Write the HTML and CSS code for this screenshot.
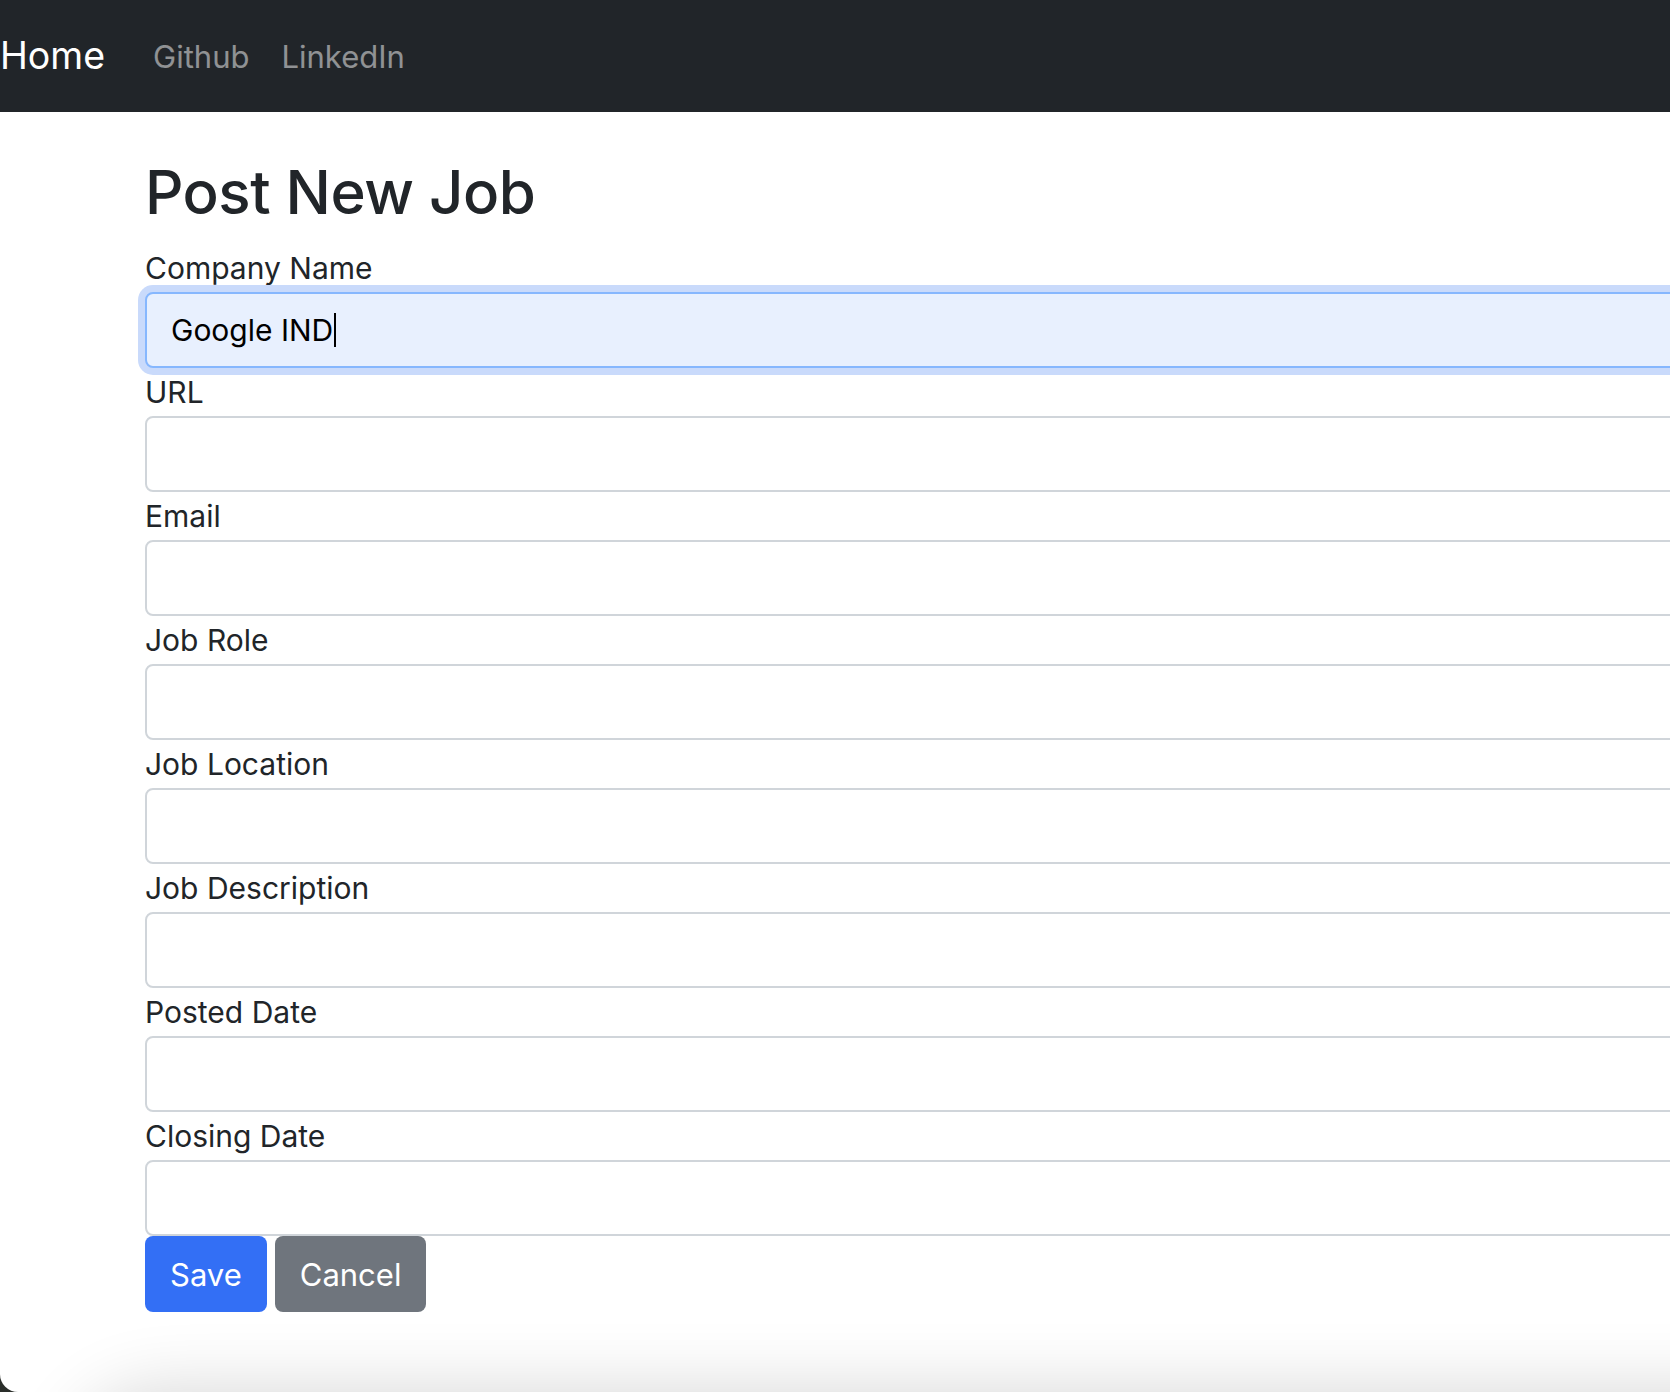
FILE: index.html
```html
<!DOCTYPE html>
<html lang="en">
<head>
<meta charset="utf-8">
<title>Post New Job</title>
<link rel="stylesheet" href="styles.css">
</head>
<body>
<div class="window">
  <nav class="navbar">
    <a class="brand" href="#">Home</a>
    <ul class="nav">
      <li><a class="nav-link" href="#">Github</a></li>
      <li><a class="nav-link" href="#">LinkedIn</a></li>
    </ul>
  </nav>
  <main class="content">
    <h1 class="title">Post New Job</h1>
    <form class="form">
      <label class="label">Company Name</label>
      <div class="control focused">Google IND<span class="caret"></span></div>
      <label class="label">URL</label>
      <input class="control" type="text">
      <label class="label">Email</label>
      <input class="control" type="text">
      <label class="label">Job Role</label>
      <input class="control" type="text">
      <label class="label">Job Location</label>
      <input class="control" type="text">
      <label class="label">Job Description</label>
      <input class="control" type="text">
      <label class="label">Posted Date</label>
      <input class="control" type="text">
      <label class="label">Closing Date</label>
      <input class="control" type="text">
      <div class="actions">
        <button type="button" class="btn btn-primary">Save</button>
        <button type="button" class="btn btn-secondary">Cancel</button>
      </div>
    </form>
  </main>
  <div class="dock-shadow"></div>
</div>
</body>
</html>
```

FILE: styles.css
```css
html, body {
  margin: 0;
  padding: 0;
  background: #2a2e2a;
}

body {
  font-family: Inter, "Noto Sans", "Liberation Sans", sans-serif;
  color: #212529;
}

.window {
  position: relative;
  width: 1670px;
  height: 1392px;
  overflow: hidden;
  background: #ffffff;
  border-bottom-left-radius: 18px;
}

.navbar {
  display: flex;
  align-items: center;
  height: 112px;
  background: #212529;
  padding: 0;
  box-sizing: border-box;
}

.brand {
  font-size: 37.5px;
  color: #ffffff;
  text-decoration: none;
  margin-right: 32px;
  line-height: 1;
  padding-left: 0;
}

.nav {
  display: flex;
  list-style: none;
  margin: 0;
  padding: 0;
}

.nav-link {
  display: block;
  padding: 0 16px;
  font-size: 31px;
  color: rgba(255, 255, 255, 0.5);
  text-decoration: none;
}

.content {
  padding: 44px 0 0 145px;
}

.title {
  margin: 0 0 16px;
  font-size: 60px;
  font-weight: 500;
  line-height: 72px;
  letter-spacing: -0.5px;
}

.form {
  display: flex;
  flex-direction: column;
  align-items: flex-start;
}

.label {
  display: block;
  font-size: 30px;
  line-height: 48px;
  height: 48px;
}

.control {
  display: block;
  box-sizing: border-box;
  width: 1600px;
  height: 76px;
  margin: 0;
  padding: 0 24px;
  border: 2px solid #d0d5da;
  border-radius: 8px;
  background: #ffffff;
  font-family: inherit;
  font-size: 30px;
  color: #000000;
  outline: none;
}

.control.focused {
  display: flex;
  align-items: center;
  background: #e8f0fe;
  border-color: #86b7fe;
  box-shadow: 0 0 0 7px #c9dafb;
}

.caret {
  display: inline-block;
  width: 2px;
  height: 34px;
  background: #000000;
  margin-left: 1px;
}

.actions {
  display: flex;
  gap: 8px;
}

.btn {
  height: 76px;
  padding: 0 25px;
  border: none;
  border-radius: 8px;
  font-family: inherit;
  font-size: 31px;
  color: #ffffff;
  cursor: pointer;
}

.btn-primary {
  background: #336ff5;
}

.btn-secondary {
  background: #6f757d;
}

.dock-shadow {
  position: absolute;
  left: 80px;
  right: -200px;
  top: 1400px;
  height: 200px;
  border-radius: 80px;
  background: #e0e0e0;
  box-shadow: 0 0 70px 10px rgba(0, 0, 0, 0.16);
}
```
